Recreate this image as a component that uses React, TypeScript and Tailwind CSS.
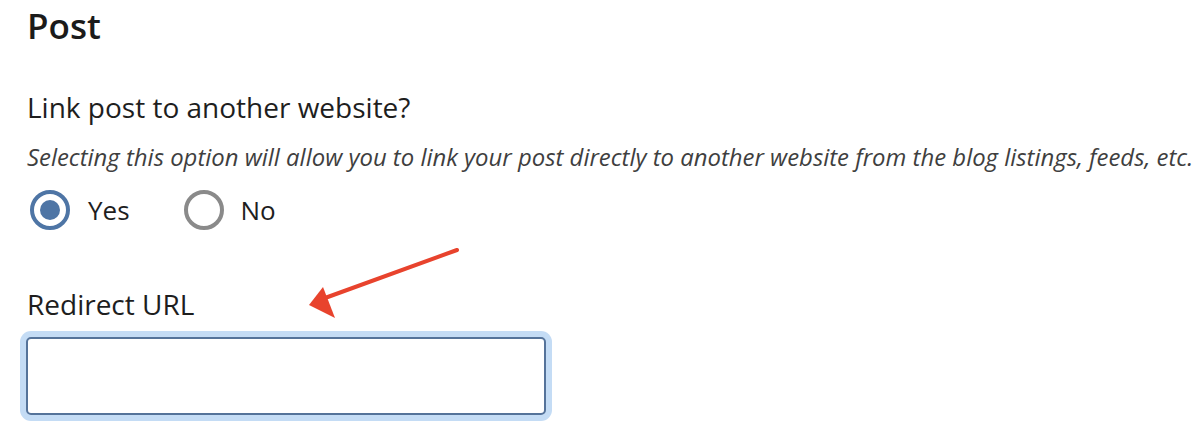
import React from "react";

export default function App() {
  return (
    <div
      className="relative w-[1194px] h-[445px] bg-white overflow-hidden pl-[27px]"
      style={{ fontFamily: '"Open Sans", "Noto Sans", sans-serif' }}
    >
      <h1 className="mt-[5px] text-[35px] leading-[42px] font-semibold text-[#1b1b1b]">Post</h1>
      <div className="mt-[42px] text-[28px] leading-[36px] text-[#1e1e1e]">Link post to another website?</div>
      <div className="mt-[17px] text-[23.9px] leading-[30px] italic text-[#3f3f3f] whitespace-nowrap">
        Selecting this option will allow you to link your post directly to another website from the blog listings, feeds, etc.
      </div>
      <div className="mt-[18px] flex items-center h-[40px] ml-[3px]">
        <label className="flex items-center">
          <span className="w-[40px] h-[40px] rounded-full border-[4px] border-[#4e75a5] flex items-center justify-center">
            <span className="w-[20px] h-[20px] rounded-full bg-[#4e75a5]" />
          </span>
          <span className="ml-[18px] text-[26px] leading-[36px] text-[#1e1e1e]">Yes</span>
        </label>
        <label className="flex items-center ml-[54px]">
          <span className="w-[40px] h-[40px] rounded-full border-[4px] border-[#8a8a8a]" />
          <span className="ml-[17px] text-[26px] leading-[36px] text-[#1e1e1e]">No</span>
        </label>
      </div>
      <div className="mt-[56px] text-[28px] leading-[36px] text-[#1e1e1e]">Redirect URL</div>
      <input
        type="text"
        className="mt-[15px] block w-[520px] h-[78px] -ml-px rounded-[5px] border-2 border-[#55739a] bg-white ring-[6px] ring-[#c4dcf5] outline-none"
      />
      <svg
        className="absolute left-0 top-0 pointer-events-none"
        width="1194"
        height="445"
        viewBox="0 0 1194 445"
      >
        <line x1="457" y1="250" x2="325" y2="298" stroke="#e8432d" strokeWidth="4" strokeLinecap="round" />
        <polygon points="309,305 323,287 335,318" fill="#e8432d" />
      </svg>
    </div>
  );
}
